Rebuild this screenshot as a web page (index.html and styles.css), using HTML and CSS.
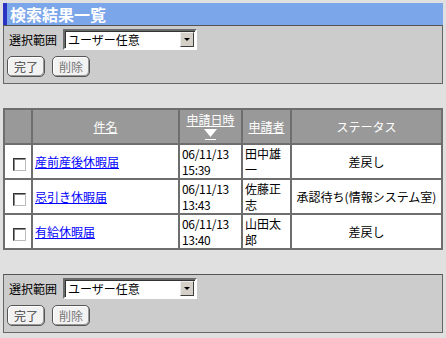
FILE: index.html
```html
<!DOCTYPE html>
<html lang="ja">
<head>
  <meta charset="UTF-8">
  <title>検索結果一覧</title>
  <link rel="stylesheet" href="styles.css">
</head>
<body>
  <div class="title">検索結果一覧</div>

  <!-- top controls -->
  <div class="panel">
    <div class="range-row">
      <span class="range-label">選択範囲</span>
      <div class="select-wrap">
        <select class="select">
          <option>ユーザー任意</option>
        </select>
        <span class="select-arrow"></span>
      </div>
    </div>
    <div class="btn-row">
      <button class="btn">完了</button>
      <button class="btn btn-muted">削除</button>
    </div>
  </div>

  <table class="list">
    <colgroup>
      <col class="col-check">
      <col class="col-name">
      <col class="col-date">
      <col class="col-user">
      <col class="col-status">
    </colgroup>
    <thead>
      <tr>
        <th></th>
        <th><a href="#">件名</a></th>
        <th>
          <a href="#">申請日時</a>
          <svg class="sort-arrow" width="13" height="12" viewBox="0 0 13 12">
            <polygon points="0,0 13,0 6.5,8" fill="#fff"/>
            <rect x="1" y="10" width="11" height="1" fill="#fff"/>
          </svg>
        </th>
        <th><a href="#">申請者</a></th>
        <th>ステータス</th>
      </tr>
    </thead>
    <tbody>
      <tr>
        <td class="check"><input type="checkbox"></td>
        <td><a href="#">産前産後休暇届</a></td>
        <td class="date">06/11/13<br>15:39</td>
        <td>田中雄一</td>
        <td class="status">差戻し</td>
      </tr>
      <tr>
        <td class="check"><input type="checkbox"></td>
        <td><a href="#">忌引き休暇届</a></td>
        <td class="date">06/11/13<br>13:43</td>
        <td>佐藤正志</td>
        <td class="status">承認待ち(情報システム室)</td>
      </tr>
      <tr>
        <td class="check"><input type="checkbox"></td>
        <td><a href="#">有給休暇届</a></td>
        <td class="date">06/11/13<br>13:40</td>
        <td>山田太郎</td>
        <td class="status">差戻し</td>
      </tr>
    </tbody>
  </table>

  <!-- bottom controls -->
  <div class="panel panel-bottom">
    <div class="range-row">
      <span class="range-label">選択範囲</span>
      <div class="select-wrap">
        <select class="select">
          <option>ユーザー任意</option>
        </select>
        <span class="select-arrow"></span>
      </div>
    </div>
    <div class="btn-row">
      <button class="btn">完了</button>
      <button class="btn btn-muted">削除</button>
    </div>
  </div>
</body>
</html>
```

FILE: styles.css
```css
body {
  margin: 3px;
  background-color: #e0e0e0;
  font-family: "Noto Sans CJK JP", "DejaVu Sans", sans-serif;
  font-size: 12px;
  color: #000;
}

/* Title bar */
.title {
  height: 22px;
  line-height: 22px;
  background-color: #7ca6ea;
  border-left: 4px solid #2b34c2;
  padding-left: 3px;
  color: #fff;
  font-size: 16px;
  font-weight: bold;
}

/* Control panels */
.panel {
  background-color: #cccccc;
  border: 1px solid #666;
  border-top-color: #555;
  padding: 3px 3px 6px;
}

.panel-bottom {
  margin-top: 24px;
}

.range-row {
  display: flex;
  align-items: center;
  gap: 6px;
  height: 21px;
}

.range-label {
  padding-left: 2px;
}

.select-wrap {
  position: relative;
  width: 134px;
  height: 21px;
}

.select {
  appearance: none;
  -webkit-appearance: none;
  width: 100%;
  height: 100%;
  margin: 0;
  padding: 0 0 0 3px;
  background-color: #fff;
  border: 2px solid;
  border-color: #6a6a6a #fff #fff #6a6a6a;
  box-shadow: inset 1px 1px #333;
  border-radius: 0;
  font-family: inherit;
  font-size: 12px;
  color: #000;
}

/* Dropdown button drawn over the select */
.select-arrow {
  position: absolute;
  top: 3px;
  right: 3px;
  width: 14px;
  height: 15px;
  background-color: #d4d0c8;
  border: 1px solid;
  border-color: #eee #404040 #404040 #eee;
  box-sizing: border-box;
  pointer-events: none;
}

.select-arrow::after {
  content: "";
  position: absolute;
  left: 3px;
  top: 5px;
  border-left: 3px solid transparent;
  border-right: 3px solid transparent;
  border-top: 3px solid #000;
}

.btn-row {
  display: flex;
  gap: 7px;
  margin-top: 6px;
}

.btn {
  height: 21px;
  min-width: 38px;
  padding: 0 6px;
  background-color: #f2f2f2;
  border: 1px solid #555;
  border-radius: 5px;
  box-shadow: inset -1px -1px #999, inset 1px 1px #fff;
  font-family: inherit;
  font-size: 12px;
  color: #444;
  cursor: pointer;
}

.btn-muted {
  color: #777;
}

/* Result table */
.list {
  width: 440px;
  margin-top: 24px;
  border: 1px solid #6e6e6e;
  border-spacing: 0;
  table-layout: fixed;
  background-color: #fff;
}

.col-check { width: 28px; }
.col-name { width: 147px; }
.col-date { width: 63px; }
.col-user { width: 49px; }

.list th,
.list td {
  border: 1px solid #6e6e6e;
  height: 33px;
  padding: 0 2px;
  line-height: 16px;
}

.list th {
  background-color: #999999;
  color: #fff;
  font-weight: normal;
  text-align: center;
}

.list th a {
  color: #fff;
}

.sort-arrow {
  display: block;
  margin: 1px auto 0;
}

.list td a {
  color: #0000ff;
}

.list td.date {
  padding: 0 1px 0 2px;
  letter-spacing: -0.3px;
}

.list td.check {
  text-align: center;
}

.check input {
  appearance: none;
  -webkit-appearance: none;
  width: 13px;
  height: 13px;
  margin: 4px 0 0 2px;
  background-color: #fff;
  border: 1px solid;
  border-color: #333 #bbb #bbb #333;
  box-shadow: inset 1px 1px #888;
  vertical-align: middle;
}

.list td.status {
  text-align: center;
}
```
